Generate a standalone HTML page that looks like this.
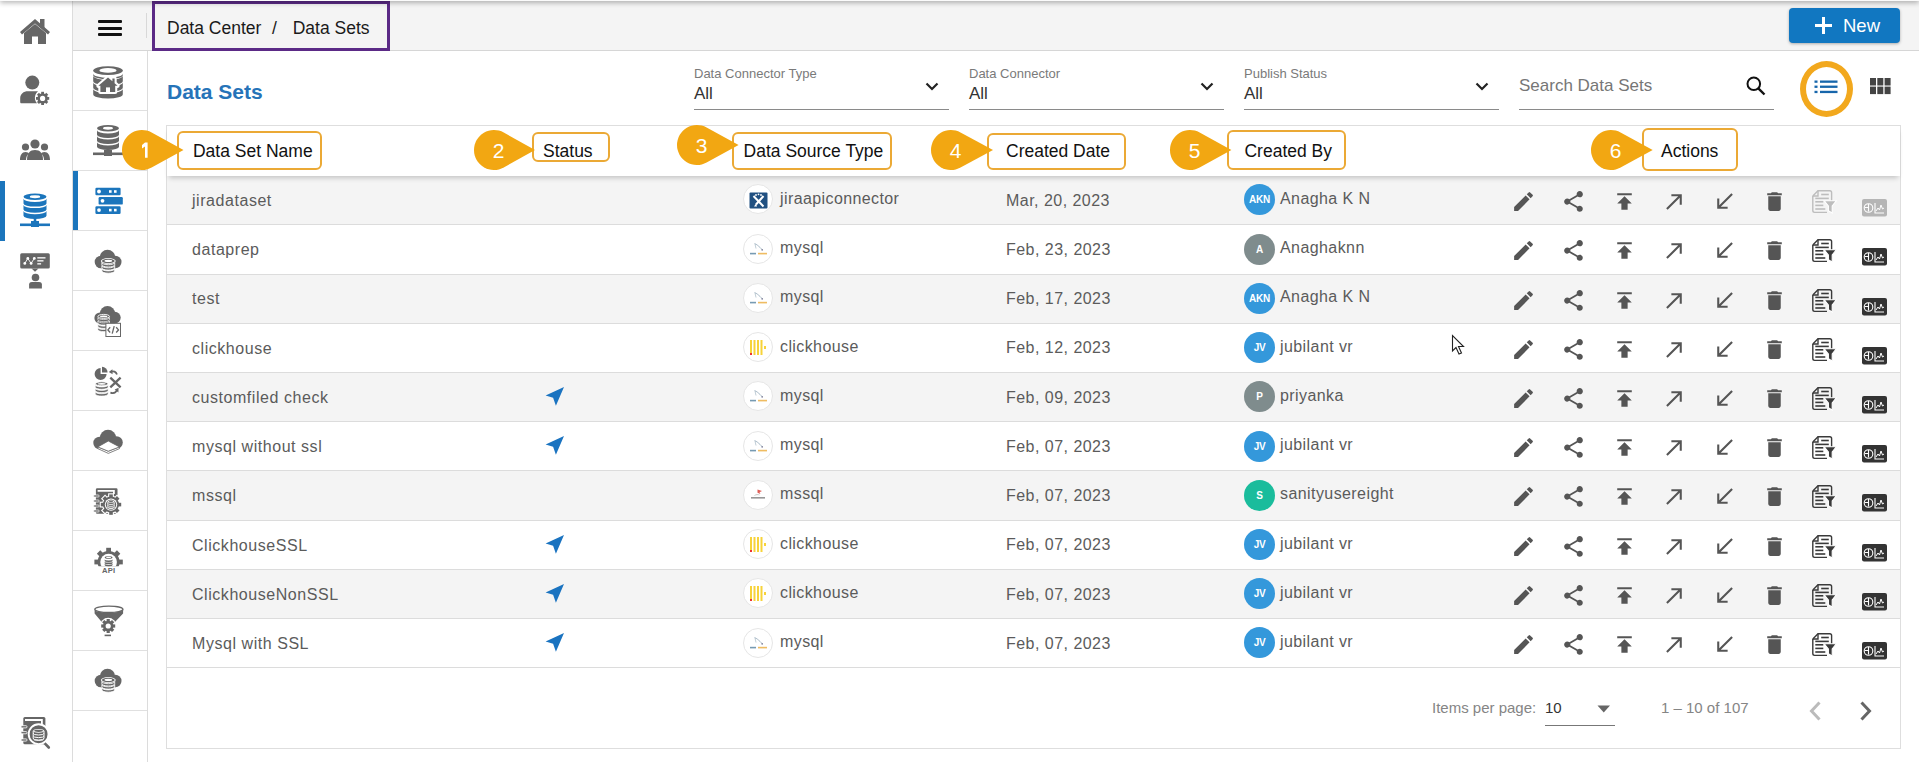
<!DOCTYPE html>
<html><head><meta charset="utf-8">
<style>
*{box-sizing:border-box;margin:0;padding:0}
html,body{width:1919px;height:762px;overflow:hidden;background:#fff;font-family:"Liberation Sans",sans-serif;position:relative}
.abs{position:absolute}
.ic{position:absolute;overflow:visible}
#topshadow{position:absolute;left:0;top:-9px;width:1919px;height:10px;background:#fbfbfb;box-shadow:0 2px 5px rgba(0,0,0,.28);z-index:50}
#sb1{left:0;top:0;width:73px;height:762px;background:#fff;border-right:1px solid #dcdcdc}
#topbar{left:73px;top:0;width:1846px;height:51px;background:#f4f4f4;border-bottom:1px solid #d6d6d6}
#sb2{left:73px;top:51px;width:75px;height:711px;background:#fff;border-right:1px solid #dcdcdc}
#crumb{left:152px;top:1px;width:238px;height:50px;border:3px solid #5b2a86;font-size:18px;color:#222;line-height:47px;padding-left:11px;white-space:pre;z-index:5}
#newbtn{left:1789px;top:8px;width:111px;height:35px;background:#1177c1;border-radius:4px;color:#fff;font-size:18.5px;line-height:35px;box-shadow:0 1px 3px rgba(0,0,0,.3)}
#title{left:167px;top:80px;font-size:21px;font-weight:bold;color:#2673b8}
.flt{position:absolute;top:62px;width:255px;height:48px;border-bottom:1px solid #8a8a8a}
.flt .lb{position:absolute;left:0;top:3.5px;font-size:13px;color:#7a7a7a;white-space:nowrap}
.flt .vl{position:absolute;left:0;top:22px;font-size:17px;color:#333;white-space:nowrap}
.flt svg{position:absolute;right:10px;top:19.5px}
#card{left:166px;top:125px;width:1735px;height:624px;border:1px solid #dedede;background:#fff}
#thead{left:167px;top:126px;width:1733px;height:50px;background:#fff;box-shadow:0 4px 5px -2px rgba(0,0,0,.2);z-index:3}
.hbox{position:absolute;border:2px solid #eba935;border-radius:6px;background:#fff;font-size:17.5px;color:#111;white-space:nowrap;z-index:10}
.row{left:167px;width:1733px;height:49.23px;border-bottom:1px solid #dcdcdc;font-size:16px;color:#5b5b5b;letter-spacing:0.3px}
.row .t{position:absolute;white-space:nowrap}
.av{position:absolute;width:31px;height:31px;border-radius:50%;color:#fff;font-size:10px;font-weight:bold;text-align:center;line-height:31px;letter-spacing:-0.3px}
.srcic{position:absolute;width:30px;height:30px;border-radius:50%;background:#fff;border:1px solid #e6e6e6}

</style></head><body>
<div id="topshadow"></div>
<div id="sb1" class="abs"></div>
<div id="topbar" class="abs"></div>
<div id="sb2" class="abs"></div>
<svg class="ic" style="left:19px;top:17px;" width="32" height="28" viewBox="0 0 32 28"><g fill="#666"><path d="M1 15 L16 2 L31 15 L29 17.5 L16 6.5 L3 17.5 Z"/><rect x="21" y="2" width="4.5" height="9"/><path d="M5 16 L16 7 L27 16 V27 H19 V19.5 H13 V27 H5 Z"/></g></svg><svg class="ic" style="left:19px;top:75px;" width="31" height="30" viewBox="0 0 31 30"><g fill="#666"><circle cx="13.3" cy="7.6" r="7"/><path d="M1.2 27 V23.5 C1.2 19 4.5 16.3 9 16.3 H19 C16.5 18.5 15.5 21.5 16 24.5 C16.3 26 17 27.3 18 28.3 H2.5 C1.7 28.3 1.2 27.8 1.2 27Z"/></g><g transform="translate(23.6,23.4)"><circle r="3.9" fill="none" stroke="#666" stroke-width="2.6"/><rect x="-1.4" y="-6.6" width="2.8" height="2.8" fill="#666" transform="rotate(0)"/><rect x="-1.4" y="-6.6" width="2.8" height="2.8" fill="#666" transform="rotate(45)"/><rect x="-1.4" y="-6.6" width="2.8" height="2.8" fill="#666" transform="rotate(90)"/><rect x="-1.4" y="-6.6" width="2.8" height="2.8" fill="#666" transform="rotate(135)"/><rect x="-1.4" y="-6.6" width="2.8" height="2.8" fill="#666" transform="rotate(180)"/><rect x="-1.4" y="-6.6" width="2.8" height="2.8" fill="#666" transform="rotate(225)"/><rect x="-1.4" y="-6.6" width="2.8" height="2.8" fill="#666" transform="rotate(270)"/><rect x="-1.4" y="-6.6" width="2.8" height="2.8" fill="#666" transform="rotate(315)"/></g></svg><svg class="ic" style="left:19px;top:139px;" width="32" height="23" viewBox="0 0 32 23"><g fill="#666"><circle cx="16" cy="5" r="4.6"/><circle cx="6.5" cy="8" r="3.6"/><circle cx="25.5" cy="8" r="3.6"/><path d="M8 21 C8 14 11 11 16 11 C21 11 24 14 24 21Z"/><path d="M1 21 C1 16 3 13 6.5 13 C8.5 13 9.5 14 10 14.5 C8 16 7 18 7 21Z"/><path d="M31 21 C31 16 29 13 25.5 13 C23.5 13 22.5 14 22 14.5 C24 16 25 18 25 21Z"/></g></svg><svg class="ic" style="left:19px;top:192px;" width="32" height="37" viewBox="0 0 32 37"><g fill="#1b75bc"><ellipse cx="16" cy="4.7" rx="11.5" ry="3.2" fill="#1b75bc"/><ellipse cx="16" cy="4.7" rx="5.175" ry="1.4400000000000002" fill="#fff"/><path d="M4.5 6.7 v4.7 a11.5 3.2 0 0 0 23 0 v-4.7 a11.5 3.2 0 0 1 -23 0Z" fill="#1b75bc"/><path d="M4.5 12.9 v4.7 a11.5 3.2 0 0 0 23 0 v-4.7 a11.5 3.2 0 0 1 -23 0Z" fill="#1b75bc"/><path d="M4.5 19.1 v4.7 a11.5 3.2 0 0 0 23 0 v-4.7 a11.5 3.2 0 0 1 -23 0Z" fill="#1b75bc"/><rect x="1" y="31.5" width="30" height="2.6"/><rect x="14.7" y="25" width="2.6" height="7"/><rect x="12" y="29" width="8" height="6"/></g></svg><svg class="ic" style="left:19px;top:252px;" width="32" height="38" viewBox="0 0 32 38"><g fill="#666"><rect x="1.2" y="1.2" width="29.6" height="15.4" rx="1.5"/><path d="M12.5 16.5 L16 19.8 L19.5 16.5Z"/><circle cx="16.5" cy="25.5" r="3.8"/><path d="M10.1 36.6 V32.5 C10.1 30.8 11.3 30 13 30 H20 C21.7 30 22.9 30.8 22.9 32.5 V36.6Z"/></g><g fill="none" stroke="#fff" stroke-width="0.9"><path d="M5.8 11.4 L8.8 6.4 L12.1 11.4 L15.3 6.4"/></g><g fill="#fff"><circle cx="5.8" cy="11.4" r="1.4"/><circle cx="8.8" cy="6.4" r="1.4"/><circle cx="12.1" cy="11.4" r="1.4"/><circle cx="15.3" cy="6.4" r="1.4"/><rect x="18.3" y="5.2" width="8.2" height="1.3"/><rect x="18.3" y="8.2" width="6.2" height="1.3"/><rect x="18.3" y="11.2" width="3.8" height="1.3"/></g></svg><svg class="ic" style="left:20px;top:716px;" width="32" height="34" viewBox="0 0 32 34"><rect x="3.3" y="1.1" width="22.1" height="27.2" rx="1.5" fill="#666"/><path d="M5 2.9 H22.8 V8 H21 V4.9 H5Z" fill="#fff"/><rect x="1" y="9.7" width="6" height="2.2" rx="1" fill="#666" stroke="#fff" stroke-width="0.8"/><rect x="1" y="15.6" width="6" height="2.2" rx="1" fill="#666" stroke="#fff" stroke-width="0.8"/><rect x="1" y="22.9" width="6" height="2.2" rx="1" fill="#666" stroke="#fff" stroke-width="0.8"/><path d="M24.3 26.8 L28.8 31.5" stroke="#666" stroke-width="2.6" stroke-linecap="round"/><circle cx="18.6" cy="18.2" r="9.9" fill="#666" stroke="#fff" stroke-width="1.9"/><ellipse cx="18.6" cy="14.8" rx="5.4" ry="1.9" fill="#fff"/><ellipse cx="18.6" cy="14.8" rx="4.4" ry="1.1" fill="#666"/><path d="M13.2 17.2 a5.4 1.8 0 0 0 10.8 0" fill="none" stroke="#fff" stroke-width="1"/><path d="M13.2 19.8 a5.4 1.8 0 0 0 10.8 0" fill="none" stroke="#fff" stroke-width="1"/><path d="M13.2 22.4 a5.4 1.8 0 0 0 10.8 0" fill="none" stroke="#fff" stroke-width="1"/><path d="M13.2 14.8 V22.5 a5.4 1.8 0 0 0 10.8 0 V14.8" fill="none" stroke="#fff" stroke-width="1"/></svg><div class="abs" style="left:0;top:181px;width:5px;height:60px;background:#1b75bc"></div><div class="abs" style="left:73px;top:110px;width:74px;height:1px;background:#e0e0e0"></div><div class="abs" style="left:73px;top:170px;width:74px;height:1px;background:#e0e0e0"></div><div class="abs" style="left:73px;top:230px;width:74px;height:1px;background:#e0e0e0"></div><div class="abs" style="left:73px;top:290px;width:74px;height:1px;background:#e0e0e0"></div><div class="abs" style="left:73px;top:350px;width:74px;height:1px;background:#e0e0e0"></div><div class="abs" style="left:73px;top:410px;width:74px;height:1px;background:#e0e0e0"></div><div class="abs" style="left:73px;top:470px;width:74px;height:1px;background:#e0e0e0"></div><div class="abs" style="left:73px;top:530px;width:74px;height:1px;background:#e0e0e0"></div><div class="abs" style="left:73px;top:590px;width:74px;height:1px;background:#e0e0e0"></div><div class="abs" style="left:73px;top:650px;width:74px;height:1px;background:#e0e0e0"></div><div class="abs" style="left:73px;top:710px;width:74px;height:1px;background:#e0e0e0"></div><div class="abs" style="left:73px;top:171px;width:5px;height:59px;background:#1b75bc"></div><svg class="ic" style="left:92px;top:65px;" width="32" height="33" viewBox="0 0 32 33"><ellipse cx="16" cy="5.6" rx="14.8" ry="4.4" fill="#666"/><ellipse cx="16" cy="5.4" rx="8.6" ry="2.3" fill="#fff"/><path d="M1.2 10.6 v5.4 a14.8 4.4 0 0 0 29.6 0 v-5.4 a14.8 4.4 0 0 1 -29.6 0Z" fill="#666"/><path d="M1.2 17.2 v5.4 a14.8 4.4 0 0 0 29.6 0 v-5.4 a14.8 4.4 0 0 1 -29.6 0Z" fill="#666"/><path d="M1.2 23.8 v5.4 a14.8 4.4 0 0 0 29.6 0 v-5.4 a14.8 4.4 0 0 1 -29.6 0Z" fill="#666"/><path d="M1.2 8.5 v1.5 a14.8 4.4 0 0 0 29.6 0 v-1.5 a14.8 4.4 0 0 1 -29.6 0Z" fill="#666"/><path d="M16 12.6 L6.4 20.8 H8.4 V27 H23.2 V20.8 H25.6 L22.6 18.2 V13.6 H20.4 V16.3Z" fill="#fff" stroke="#fff" stroke-width="4.2" stroke-linejoin="round"/><path d="M16 12.6 L6.4 20.8 H8.4 V27 H23.2 V20.8 H25.6 L22.6 18.2 V13.6 H20.4 V16.3Z" fill="#666"/><rect x="14" y="22.4" width="4" height="4.6" fill="#fff"/></svg><svg class="ic" style="left:92px;top:124px;" width="32" height="34" viewBox="0 0 32 34"><ellipse cx="16" cy="4.2" rx="11.0" ry="3.2" fill="#666"/><ellipse cx="16" cy="4.2" rx="4.95" ry="1.4400000000000002" fill="#fff"/><path d="M5.0 6.2 v4.5 a11.0 3.2 0 0 0 22 0 v-4.5 a11.0 3.2 0 0 1 -22 0Z" fill="#666"/><path d="M5.0 12.2 v4.5 a11.0 3.2 0 0 0 22 0 v-4.5 a11.0 3.2 0 0 1 -22 0Z" fill="#666"/><path d="M5.0 18.2 v4.5 a11.0 3.2 0 0 0 22 0 v-4.5 a11.0 3.2 0 0 1 -22 0Z" fill="#666"/><g fill="#666"><rect x="1" y="28.5" width="30" height="2.6"/><rect x="14.7" y="23" width="2.6" height="6"/><rect x="12" y="26" width="8" height="6"/></g></svg><svg class="ic" style="left:94px;top:187px;" width="30" height="28" viewBox="0 0 30 28"><g fill="#1b75bc"><rect x="1.4" y="0.7" width="25.2" height="7.6" rx="1.2"/><rect x="4.6" y="10" width="24.2" height="7.6" rx="1.2"/><rect x="1.4" y="19.3" width="25.2" height="7.6" rx="1.2"/></g><g fill="#fff"><circle cx="5" cy="4.5" r="1.9"/><rect x="15" y="3.2" width="2.6" height="2.6"/><rect x="20" y="3.2" width="2.6" height="2.6"/><circle cx="8.5" cy="13.8" r="1.9"/><circle cx="5" cy="23.1" r="1.9"/><rect x="15" y="21.8" width="2.6" height="2.6"/><rect x="20" y="21.8" width="2.6" height="2.6"/></g></svg><svg class="ic" style="left:93px;top:249px;" width="30" height="25" viewBox="0 0 30 25"><g fill="#666"><circle cx="8" cy="13" r="6.3"/><circle cx="14.5" cy="8.5" r="7.7"/><circle cx="22.3" cy="13" r="6.2"/><rect x="8" y="12" width="14.3" height="7.3"/></g><ellipse cx="15.3" cy="12" rx="7.4" ry="3" fill="#fff"/><ellipse cx="15.3" cy="12" rx="6.4" ry="2.2" fill="#666"/><ellipse cx="15.3" cy="11.9" rx="3.8" ry="1.1" fill="#fff"/><path d="M8.9 13.6 v2.3 a6.4 2.1 0 0 0 12.8 0 v-2.3 a6.4 2.1 0 0 1 -12.8 0Z" fill="#666" stroke="#fff" stroke-width="0.9"/><path d="M8.9 16.7 v2.3 a6.4 2.1 0 0 0 12.8 0 v-2.3 a6.4 2.1 0 0 1 -12.8 0Z" fill="#666" stroke="#fff" stroke-width="0.9"/><path d="M8.9 19.8 v2.3 a6.4 2.1 0 0 0 12.8 0 v-2.3 a6.4 2.1 0 0 1 -12.8 0Z" fill="#666" stroke="#fff" stroke-width="0.9"/></svg><svg class="ic" style="left:93px;top:305px;" width="30" height="33" viewBox="0 0 30 33"><g fill="#666"><circle cx="7" cy="13" r="5.6"/><circle cx="14.5" cy="8.6" r="7.6"/><circle cx="21.8" cy="12.6" r="5.9"/><rect x="7" y="12" width="15" height="7.6"/></g><ellipse cx="10.7" cy="11.4" rx="5.8" ry="2" fill="#666" stroke="#fff" stroke-width="0.9"/><ellipse cx="10.7" cy="11.4" rx="3.60" ry="0.9" fill="#fff"/><path d="M4.90 12.60 v2.10 a5.8 2 0 0 0 11.6 0 v-2.10 a5.8 2 0 0 1 -11.6 0Z" fill="#666" stroke="#fff" stroke-width="0.65"/><path d="M4.90 15.90 v2.10 a5.8 2 0 0 0 11.6 0 v-2.10 a5.8 2 0 0 1 -11.6 0Z" fill="#666" stroke="#fff" stroke-width="0.65"/><path d="M4.90 19.20 v2.10 a5.8 2 0 0 0 11.6 0 v-2.10 a5.8 2 0 0 1 -11.6 0Z" fill="#666" stroke="#fff" stroke-width="0.65"/><path d="M4.90 22.50 v2.10 a5.8 2 0 0 0 11.6 0 v-2.10 a5.8 2 0 0 1 -11.6 0Z" fill="#666" stroke="#fff" stroke-width="0.65"/><rect x="12.9" y="18.3" width="14.6" height="13.2" fill="#fff" stroke="#666" stroke-width="1"/><path d="M17.2 22.3 L14.9 24.9 L17.2 27.5 M23.2 22.3 L25.5 24.9 L23.2 27.5" fill="none" stroke="#666" stroke-width="1.3"/><path d="M21.2 21.2 L19.2 28.6" stroke="#666" stroke-width="1.3"/></svg><svg class="ic" style="left:94px;top:366px;" width="30" height="30" viewBox="0 0 30 30"><g fill="#666"><path d="M6.6 2.1 A6 6 0 1 0 12.6 8.1 H6.6Z"/><path d="M8 0.8 A5.6 5.6 0 0 1 13.6 6.4 H8Z"/></g><path d="M16.6 5.8 C19.5 4.6 22 5.6 23 8.6" fill="none" stroke="#666" stroke-width="1.7"/><path d="M14.8 5.9 L18.4 3.2 L18.6 8.2Z" fill="#666"/><path d="M16.3 11.6 L26.6 21.4 M26.6 11.6 L16.3 21.4" stroke="#666" stroke-width="2.3"/><path d="M16.4 26.6 C19.5 27.6 22 26.6 23 24" fill="none" stroke="#666" stroke-width="1.7"/><path d="M20.6 23.6 L24.6 21.8 L24.4 26.4Z" fill="#666"/><ellipse cx="7.7" cy="17.8" rx="6.4" ry="2" fill="#666" stroke="#fff" stroke-width="0.9"/><ellipse cx="7.7" cy="17.8" rx="3.97" ry="0.9" fill="#fff"/><path d="M1.30 19.00 v2.20 a6.4 2 0 0 0 12.8 0 v-2.20 a6.4 2 0 0 1 -12.8 0Z" fill="#666" stroke="#fff" stroke-width="0.65"/><path d="M1.30 22.40 v2.20 a6.4 2 0 0 0 12.8 0 v-2.20 a6.4 2 0 0 1 -12.8 0Z" fill="#666" stroke="#fff" stroke-width="0.65"/><path d="M1.30 25.80 v2.20 a6.4 2 0 0 0 12.8 0 v-2.20 a6.4 2 0 0 1 -12.8 0Z" fill="#666" stroke="#fff" stroke-width="0.65"/></svg><svg class="ic" style="left:92px;top:428px;" width="32" height="28" viewBox="0 0 32 28"><g fill="#666"><circle cx="7.5" cy="15" r="6.2"/><circle cx="16" cy="10" r="8.2"/><circle cx="24.5" cy="14.5" r="6.3"/><rect x="7.5" y="13" width="17" height="8.2"/></g><path d="M5.8 18.9 V20.6 L16.3 25.4 L27.5 20.6 V18.9 L16.3 23.2Z" fill="#fff" stroke="#666" stroke-width="0.8" stroke-linejoin="round"/><path d="M16.3 13 L5.8 18.9 L16.3 23.2 L27.5 18.9Z" fill="#fff" stroke="#666" stroke-width="0.8" stroke-linejoin="round"/></svg><svg class="ic" style="left:92px;top:487px;" width="32" height="30" viewBox="0 0 32 30"><rect x="3.9" y="1.2" width="21.6" height="25.6" rx="1.2" fill="#666"/><path d="M5.6 2.9 H22.8 V7 H21 V4.7 H5.6Z" fill="#fff"/><rect x="1.6" y="8" width="5.6" height="2" rx="1" fill="#666" stroke="#fff" stroke-width="0.7"/><rect x="1.6" y="13" width="5.6" height="2" rx="1" fill="#666" stroke="#fff" stroke-width="0.7"/><rect x="1.6" y="18" width="5.6" height="2" rx="1" fill="#666" stroke="#fff" stroke-width="0.7"/><rect x="1.6" y="23" width="5.6" height="2" rx="1" fill="#666" stroke="#fff" stroke-width="0.7"/><g transform="translate(19,17.6)"><g fill="#fff" stroke="#fff" stroke-width="2.2"><circle r="8"/><rect x="-1.8" y="-10.2" width="3.6" height="3.6" transform="rotate(0)"/><rect x="-1.8" y="-10.2" width="3.6" height="3.6" transform="rotate(45)"/><rect x="-1.8" y="-10.2" width="3.6" height="3.6" transform="rotate(90)"/><rect x="-1.8" y="-10.2" width="3.6" height="3.6" transform="rotate(135)"/><rect x="-1.8" y="-10.2" width="3.6" height="3.6" transform="rotate(180)"/><rect x="-1.8" y="-10.2" width="3.6" height="3.6" transform="rotate(225)"/><rect x="-1.8" y="-10.2" width="3.6" height="3.6" transform="rotate(270)"/><rect x="-1.8" y="-10.2" width="3.6" height="3.6" transform="rotate(315)"/></g><g fill="#666"><circle r="8"/><rect x="-1.8" y="-10.2" width="3.6" height="3.6" transform="rotate(0)"/><rect x="-1.8" y="-10.2" width="3.6" height="3.6" transform="rotate(45)"/><rect x="-1.8" y="-10.2" width="3.6" height="3.6" transform="rotate(90)"/><rect x="-1.8" y="-10.2" width="3.6" height="3.6" transform="rotate(135)"/><rect x="-1.8" y="-10.2" width="3.6" height="3.6" transform="rotate(180)"/><rect x="-1.8" y="-10.2" width="3.6" height="3.6" transform="rotate(225)"/><rect x="-1.8" y="-10.2" width="3.6" height="3.6" transform="rotate(270)"/><rect x="-1.8" y="-10.2" width="3.6" height="3.6" transform="rotate(315)"/></g><circle r="6.2" fill="#fff"/><circle r="5.2" fill="#666"/></g><ellipse cx="19" cy="14.6" rx="3.2" ry="1.2" fill="#fff"/><ellipse cx="19" cy="14.6" rx="2.3" ry="0.6" fill="#666"/><path d="M15.8 16.4 a3.2 1.1 0 0 0 6.4 0" fill="none" stroke="#fff" stroke-width="0.8"/><path d="M15.8 18.3 a3.2 1.1 0 0 0 6.4 0" fill="none" stroke="#fff" stroke-width="0.8"/><path d="M15.8 20.2 a3.2 1.1 0 0 0 6.4 0" fill="none" stroke="#fff" stroke-width="0.8"/><path d="M15.8 14.6 V20.3 a3.2 1.1 0 0 0 6.4 0 V14.6" fill="none" stroke="#fff" stroke-width="0.8"/></svg><svg class="ic" style="left:93px;top:545px;" width="32" height="30" viewBox="0 0 32 30"><defs><clipPath id="gclip"><rect x="0" y="0" width="32" height="21.2"/></clipPath></defs><g clip-path="url(#gclip)"><g transform="translate(15.6,17)" fill="#666"><circle r="11"/><rect x="-2.4" y="-14.2" width="4.8" height="4.6" transform="rotate(0)"/><rect x="-2.4" y="-14.2" width="4.8" height="4.6" transform="rotate(45)"/><rect x="-2.4" y="-14.2" width="4.8" height="4.6" transform="rotate(90)"/><rect x="-2.4" y="-14.2" width="4.8" height="4.6" transform="rotate(135)"/><rect x="-2.4" y="-14.2" width="4.8" height="4.6" transform="rotate(180)"/><rect x="-2.4" y="-14.2" width="4.8" height="4.6" transform="rotate(225)"/><rect x="-2.4" y="-14.2" width="4.8" height="4.6" transform="rotate(270)"/><rect x="-2.4" y="-14.2" width="4.8" height="4.6" transform="rotate(315)"/></g><circle cx="15.6" cy="17" r="8.3" fill="#fff"/></g><ellipse cx="15.6" cy="12.6" rx="3.9" ry="1.4" fill="#666"/><ellipse cx="15.6" cy="12.5" rx="2.6" ry="0.7" fill="#fff"/><path d="M11.7 14.2 v1.5 a3.9 1.2 0 0 0 7.8 0 v-1.5 a3.9 1.2 0 0 1 -7.8 0Z" fill="#666"/><path d="M11.7 16.4 v1.5 a3.9 1.2 0 0 0 7.8 0 v-1.5 a3.9 1.2 0 0 1 -7.8 0Z" fill="#666"/><path d="M11.7 18.6 v1.5 a3.9 1.2 0 0 0 7.8 0 v-1.5 a3.9 1.2 0 0 1 -7.8 0Z" fill="#666"/><text x="15.6" y="27.6" font-size="7.6" font-family="Liberation Sans" font-weight="bold" text-anchor="middle" fill="#666" style="letter-spacing:0.2px">API</text></svg><svg class="ic" style="left:94px;top:604px;" width="30" height="34" viewBox="0 0 30 34"><path d="M0.6 5.4 V9.5 L7.5 17.8 H21.2 L29.1 9.5 V5.4 A14.25 3.4 0 0 1 0.6 5.4Z" fill="#666"/><ellipse cx="14.85" cy="5.3" rx="14.1" ry="3.2" fill="#fff" stroke="#666" stroke-width="1.3"/><circle cx="14.2" cy="22" r="8.2" fill="#fff"/><g transform="translate(14.2,22)" fill="#666"><circle r="5.2"/><rect x="-1.6" y="-7" width="3.2" height="3" transform="rotate(0)"/><rect x="-1.6" y="-7" width="3.2" height="3" transform="rotate(45)"/><rect x="-1.6" y="-7" width="3.2" height="3" transform="rotate(90)"/><rect x="-1.6" y="-7" width="3.2" height="3" transform="rotate(135)"/><rect x="-1.6" y="-7" width="3.2" height="3" transform="rotate(180)"/><rect x="-1.6" y="-7" width="3.2" height="3" transform="rotate(225)"/><rect x="-1.6" y="-7" width="3.2" height="3" transform="rotate(270)"/><rect x="-1.6" y="-7" width="3.2" height="3" transform="rotate(315)"/><circle r="2.6" fill="#fff"/></g><rect x="10.6" y="30.6" width="6.4" height="1.6" fill="#666"/></svg><svg class="ic" style="left:93px;top:668px;" width="30" height="25" viewBox="0 0 30 25"><g fill="#666"><circle cx="8" cy="13" r="6.3"/><circle cx="14.5" cy="8.5" r="7.7"/><circle cx="22.3" cy="13" r="6.2"/><rect x="8" y="12" width="14.3" height="7.3"/></g><ellipse cx="15.3" cy="12" rx="7.4" ry="3" fill="#fff"/><ellipse cx="15.3" cy="12" rx="6.4" ry="2.2" fill="#666"/><ellipse cx="15.3" cy="11.9" rx="3.8" ry="1.1" fill="#fff"/><path d="M8.9 13.6 v2.3 a6.4 2.1 0 0 0 12.8 0 v-2.3 a6.4 2.1 0 0 1 -12.8 0Z" fill="#666" stroke="#fff" stroke-width="0.9"/><path d="M8.9 16.7 v2.3 a6.4 2.1 0 0 0 12.8 0 v-2.3 a6.4 2.1 0 0 1 -12.8 0Z" fill="#666" stroke="#fff" stroke-width="0.9"/><path d="M8.9 19.8 v2.3 a6.4 2.1 0 0 0 12.8 0 v-2.3 a6.4 2.1 0 0 1 -12.8 0Z" fill="#666" stroke="#fff" stroke-width="0.9"/></svg><div class="abs" style="left:98px;top:20px;width:24px;height:3px;background:#111;border-radius:1px"></div><div class="abs" style="left:98px;top:26.5px;width:24px;height:3px;background:#111;border-radius:1px"></div><div class="abs" style="left:98px;top:33px;width:24px;height:3px;background:#111;border-radius:1px"></div><div class="abs" style="left:146px;top:13px;width:1px;height:25px;background:#d8d8d8"></div><div id="crumb" class="abs"></div><div class="abs" style="left:167px;top:17.8px;font-size:17.5px;color:#1a1a1a;z-index:6">Data Center</div><div class="abs" style="left:272px;top:17.8px;font-size:17.5px;color:#1a1a1a;z-index:6">/</div><div class="abs" style="left:292.7px;top:17.8px;font-size:17.5px;color:#1a1a1a;z-index:6">Data Sets</div><div id="newbtn" class="abs"><svg class="ic" style="left:26px;top:9px" width="17" height="17"><rect x="7" y="0" width="3" height="17" fill="#fff"/><rect x="0" y="7" width="17" height="3" fill="#fff"/></svg><span style="position:absolute;left:54px;top:0">New</span></div><div id="title" class="abs">Data Sets</div><div class="flt" style="left:694px"><div class="lb">Data Connector Type</div><div class="vl">All</div><svg width="14" height="9" viewBox="0 0 14 9"><path d="M1.5 1.5 L7 7 L12.5 1.5" fill="none" stroke="#222" stroke-width="2.2"/></svg></div><div class="flt" style="left:969px"><div class="lb">Data Connector</div><div class="vl">All</div><svg width="14" height="9" viewBox="0 0 14 9"><path d="M1.5 1.5 L7 7 L12.5 1.5" fill="none" stroke="#222" stroke-width="2.2"/></svg></div><div class="flt" style="left:1244px"><div class="lb">Publish Status</div><div class="vl">All</div><svg width="14" height="9" viewBox="0 0 14 9"><path d="M1.5 1.5 L7 7 L12.5 1.5" fill="none" stroke="#222" stroke-width="2.2"/></svg></div><div class="flt" style="left:1519px"><div class="vl" style="top:14px;color:#767676">Search Data Sets</div><svg style="right:8px;top:14px" width="20" height="20" viewBox="0 0 20 20"><circle cx="7.8" cy="7.8" r="6.3" fill="none" stroke="#111" stroke-width="2"/><path d="M12.3 12.3 L18.5 18.5" stroke="#111" stroke-width="2.4"/></svg></div><div class="abs" style="left:1800px;top:61px;width:53px;height:56px;border:6px solid #f2a81d;border-radius:50%"></div><svg class="ic" style="left:1814px;top:80px;filter:none" width="24" height="14" viewBox="0 0 24 14"><g fill="#1766ab"><rect x="0.5" y="0.5" width="3" height="2.3"/><rect x="0.5" y="5.6" width="3" height="2.3"/><rect x="0.5" y="10.8" width="3" height="2.3"/><rect x="6" y="0.5" width="17.5" height="2.3"/><rect x="6" y="5.6" width="17.5" height="2.3"/><rect x="6" y="10.8" width="17.5" height="2.3"/></g></svg><svg class="ic" style="left:1869px;top:77px;" width="23" height="18" viewBox="0 0 23 18"><g fill="#444"><rect x="1.0" y="1.0" width="6" height="7.5"/><rect x="8.3" y="1.0" width="6" height="7.5"/><rect x="15.6" y="1.0" width="6" height="7.5"/><rect x="1.0" y="9.6" width="6" height="7.5"/><rect x="8.3" y="9.6" width="6" height="7.5"/><rect x="15.6" y="9.6" width="6" height="7.5"/></g></svg><div id="card" class="abs"></div><div id="thead" class="abs"></div><div class="row abs" style="top:176.10px;background:#f4f4f4"><div class="t" style="left:25px;top:15.8px;letter-spacing:0.55px">jiradataset</div><div class="srcic" style="left:576px;top:8.4px"><svg width="29" height="29" viewBox="0 0 29 29" style="position:absolute;left:0;top:0"><rect x="5.5" y="7.5" width="18" height="16" rx="1" fill="#205081"/><path d="M9.5 11 L19.5 21.5 M19.5 11 L12 19.5" stroke="#fff" stroke-width="2"/><circle cx="12" cy="10" r="0.9" fill="#fff"/><circle cx="14.5" cy="9.3" r="0.9" fill="#fff"/><circle cx="17" cy="10" r="0.9" fill="#fff"/><path d="M10 21.5 L12 18.5 L13 21.5Z" fill="#fff"/></svg></div><div class="t" style="left:613px;top:13.8px;letter-spacing:0.4px">jiraapiconnector</div><div class="t" style="left:839px;top:15.6px;letter-spacing:0.47px">Mar, 20, 2023</div><div class="av" style="left:1077px;top:8.3px;background:#3498db">AKN</div><div class="t" style="left:1113px;top:13.8px;letter-spacing:0.42px">Anagha K N</div><svg class="ic" style="left:1344px;top:13px" width="25" height="25" viewBox="0 0 24 24"><path d="M3 17.25V21h3.75L17.81 9.94l-3.75-3.75L3 17.25zM20.71 7.04a1 1 0 000-1.41l-2.34-2.34a1 1 0 00-1.41 0l-1.83 1.83 3.75 3.75 1.83-1.83z" fill="#555"/></svg><svg class="ic" style="left:1394px;top:13px" width="25" height="25" viewBox="0 0 24 24"><path d="M18 16.08c-.76 0-1.44.3-1.96.77L8.91 12.7c.05-.23.09-.46.09-.7s-.04-.47-.09-.7l7.05-4.11c.54.5 1.25.81 2.04.81 1.66 0 3-1.34 3-3s-1.34-3-3-3-3 1.34-3 3c0 .24.04.47.09.7L8.04 9.81C7.5 9.31 6.79 9 6 9c-1.66 0-3 1.34-3 3s1.34 3 3 3c.79 0 1.5-.31 2.04-.81l7.12 4.16c-.05.21-.08.43-.08.65 0 1.61 1.31 2.92 2.92 2.92 1.61 0 2.92-1.31 2.92-2.92s-1.31-2.92-2.92-2.92z" fill="#555"/></svg><svg class="ic" style="left:1445px;top:13px" width="25" height="25" viewBox="0 0 24 24"><path d="M5 4v2h14V4H5zm0 10h4v6h6v-6h4l-7-7-7 7z" fill="#555"/></svg><svg class="ic" style="left:1495px;top:13px" width="25" height="25" viewBox="0 0 24 24"><path d="M9 5v2h6.59L4 18.59 5.41 20 17 8.41V15h2V5z" fill="#555"/></svg><svg class="ic" style="left:1545px;top:13px" width="25" height="25" viewBox="0 0 24 24"><path d="M20 5.41L18.59 4 7 15.59V9H5v10h10v-2H8.41z" fill="#555"/></svg><svg class="ic" style="left:1595px;top:13px" width="25" height="25" viewBox="0 0 24 24"><path d="M6 19c0 1.1.9 2 2 2h8c1.1 0 2-.9 2-2V7H6v12zM19 4h-3.5l-1-1h-5l-1 1H5v2h14V4z" fill="#555"/></svg><svg class="ic" style="left:1645px;top:14px" width="25" height="24" viewBox="0 0 25 24"><g fill="none" stroke="#bdbdbd" stroke-width="1.4"><path d="M0.8 6 L6 0.8 H17.8 Q19.6 0.8 19.6 2.6 V11.5"/><path d="M0.8 6 V20.6 Q0.8 22.4 2.6 22.4 H15"/><path d="M0.8 6 H6 V0.8"/></g><g fill="#bdbdbd"><rect x="9.2" y="3.7" width="7.6" height="1.6"/><rect x="3.3" y="7.6" width="13.5" height="1.6"/><rect x="3.3" y="11" width="8" height="1.6"/><rect x="3.3" y="14.6" width="8" height="1.6"/><rect x="3.3" y="18.2" width="10" height="1.6"/><path d="M12.2 10.8 H24.3 L20.2 16 V23 L16.4 20.8 V16Z" stroke="#fff" stroke-width="1.1"/></g></svg><svg class="ic" style="left:1695px;top:23px" width="25" height="18" viewBox="0 0 25 18"><rect x="0" y="0" width="25" height="17.6" rx="2" fill="#b5b5b5"/><circle cx="6.5" cy="9" r="4.3" fill="none" stroke="#fff" stroke-width="1.1"/><path d="M3 8.5 H6.5 V12.5 M6.5 5 V8" stroke="#fff" stroke-width="1.1" fill="none"/><path d="M13 4 V14 H22" fill="none" stroke="#fff" stroke-width="1.1"/><path d="M14 12 L16 9 L17.5 11 L19 6 L20.5 10 L22 9" fill="none" stroke="#fff" stroke-width="1"/></svg></div><div class="row abs" style="top:225.33px;background:#fff"><div class="t" style="left:25px;top:15.8px;letter-spacing:0.55px">dataprep</div><div class="srcic" style="left:576px;top:8.4px"><svg width="29" height="29" viewBox="0 0 29 29" style="position:absolute;left:-1px;top:-1px"><path d="M11.5 9.5 C13 10 16 12 19.5 16" fill="none" stroke="#6d8ba0" stroke-width="0.7" opacity="0.8"/><path d="M12 10 L13 14.5" stroke="#6d8ba0" stroke-width="0.6" opacity="0.7"/><rect x="18.5" y="15" width="1.4" height="1.8" fill="#557" opacity="0.6"/><rect x="7" y="18.8" width="6" height="1.6" fill="#4a7a99" opacity="0.75"/><rect x="15" y="18.8" width="9" height="1.6" fill="#e8a020" opacity="0.7"/></svg></div><div class="t" style="left:613px;top:13.8px;letter-spacing:0.4px">mysql</div><div class="t" style="left:839px;top:15.6px;letter-spacing:0.47px">Feb, 23, 2023</div><div class="av" style="left:1077px;top:8.3px;background:#7f8c8d">A</div><div class="t" style="left:1113px;top:13.8px;letter-spacing:0.42px">Anaghaknn</div><svg class="ic" style="left:1344px;top:13px" width="25" height="25" viewBox="0 0 24 24"><path d="M3 17.25V21h3.75L17.81 9.94l-3.75-3.75L3 17.25zM20.71 7.04a1 1 0 000-1.41l-2.34-2.34a1 1 0 00-1.41 0l-1.83 1.83 3.75 3.75 1.83-1.83z" fill="#555"/></svg><svg class="ic" style="left:1394px;top:13px" width="25" height="25" viewBox="0 0 24 24"><path d="M18 16.08c-.76 0-1.44.3-1.96.77L8.91 12.7c.05-.23.09-.46.09-.7s-.04-.47-.09-.7l7.05-4.11c.54.5 1.25.81 2.04.81 1.66 0 3-1.34 3-3s-1.34-3-3-3-3 1.34-3 3c0 .24.04.47.09.7L8.04 9.81C7.5 9.31 6.79 9 6 9c-1.66 0-3 1.34-3 3s1.34 3 3 3c.79 0 1.5-.31 2.04-.81l7.12 4.16c-.05.21-.08.43-.08.65 0 1.61 1.31 2.92 2.92 2.92 1.61 0 2.92-1.31 2.92-2.92s-1.31-2.92-2.92-2.92z" fill="#555"/></svg><svg class="ic" style="left:1445px;top:13px" width="25" height="25" viewBox="0 0 24 24"><path d="M5 4v2h14V4H5zm0 10h4v6h6v-6h4l-7-7-7 7z" fill="#555"/></svg><svg class="ic" style="left:1495px;top:13px" width="25" height="25" viewBox="0 0 24 24"><path d="M9 5v2h6.59L4 18.59 5.41 20 17 8.41V15h2V5z" fill="#555"/></svg><svg class="ic" style="left:1545px;top:13px" width="25" height="25" viewBox="0 0 24 24"><path d="M20 5.41L18.59 4 7 15.59V9H5v10h10v-2H8.41z" fill="#555"/></svg><svg class="ic" style="left:1595px;top:13px" width="25" height="25" viewBox="0 0 24 24"><path d="M6 19c0 1.1.9 2 2 2h8c1.1 0 2-.9 2-2V7H6v12zM19 4h-3.5l-1-1h-5l-1 1H5v2h14V4z" fill="#555"/></svg><svg class="ic" style="left:1645px;top:14px" width="25" height="24" viewBox="0 0 25 24"><g fill="none" stroke="#3a3a3a" stroke-width="1.4"><path d="M0.8 6 L6 0.8 H17.8 Q19.6 0.8 19.6 2.6 V11.5"/><path d="M0.8 6 V20.6 Q0.8 22.4 2.6 22.4 H15"/><path d="M0.8 6 H6 V0.8"/></g><g fill="#3a3a3a"><rect x="9.2" y="3.7" width="7.6" height="1.6"/><rect x="3.3" y="7.6" width="13.5" height="1.6"/><rect x="3.3" y="11" width="8" height="1.6"/><rect x="3.3" y="14.6" width="8" height="1.6"/><rect x="3.3" y="18.2" width="10" height="1.6"/><path d="M12.2 10.8 H24.3 L20.2 16 V23 L16.4 20.8 V16Z" stroke="#fff" stroke-width="1.1"/></g></svg><svg class="ic" style="left:1695px;top:23px" width="25" height="18" viewBox="0 0 25 18"><rect x="0" y="0" width="25" height="17.6" rx="2" fill="#333"/><circle cx="6.5" cy="9" r="4.3" fill="none" stroke="#fff" stroke-width="1.1"/><path d="M3 8.5 H6.5 V12.5 M6.5 5 V8" stroke="#fff" stroke-width="1.1" fill="none"/><path d="M13 4 V14 H22" fill="none" stroke="#fff" stroke-width="1.1"/><path d="M14 12 L16 9 L17.5 11 L19 6 L20.5 10 L22 9" fill="none" stroke="#fff" stroke-width="1"/></svg></div><div class="row abs" style="top:274.56px;background:#f4f4f4"><div class="t" style="left:25px;top:15.8px;letter-spacing:0.55px">test</div><div class="srcic" style="left:576px;top:8.4px"><svg width="29" height="29" viewBox="0 0 29 29" style="position:absolute;left:-1px;top:-1px"><path d="M11.5 9.5 C13 10 16 12 19.5 16" fill="none" stroke="#6d8ba0" stroke-width="0.7" opacity="0.8"/><path d="M12 10 L13 14.5" stroke="#6d8ba0" stroke-width="0.6" opacity="0.7"/><rect x="18.5" y="15" width="1.4" height="1.8" fill="#557" opacity="0.6"/><rect x="7" y="18.8" width="6" height="1.6" fill="#4a7a99" opacity="0.75"/><rect x="15" y="18.8" width="9" height="1.6" fill="#e8a020" opacity="0.7"/></svg></div><div class="t" style="left:613px;top:13.8px;letter-spacing:0.4px">mysql</div><div class="t" style="left:839px;top:15.6px;letter-spacing:0.47px">Feb, 17, 2023</div><div class="av" style="left:1077px;top:8.3px;background:#3498db">AKN</div><div class="t" style="left:1113px;top:13.8px;letter-spacing:0.42px">Anagha K N</div><svg class="ic" style="left:1344px;top:13px" width="25" height="25" viewBox="0 0 24 24"><path d="M3 17.25V21h3.75L17.81 9.94l-3.75-3.75L3 17.25zM20.71 7.04a1 1 0 000-1.41l-2.34-2.34a1 1 0 00-1.41 0l-1.83 1.83 3.75 3.75 1.83-1.83z" fill="#555"/></svg><svg class="ic" style="left:1394px;top:13px" width="25" height="25" viewBox="0 0 24 24"><path d="M18 16.08c-.76 0-1.44.3-1.96.77L8.91 12.7c.05-.23.09-.46.09-.7s-.04-.47-.09-.7l7.05-4.11c.54.5 1.25.81 2.04.81 1.66 0 3-1.34 3-3s-1.34-3-3-3-3 1.34-3 3c0 .24.04.47.09.7L8.04 9.81C7.5 9.31 6.79 9 6 9c-1.66 0-3 1.34-3 3s1.34 3 3 3c.79 0 1.5-.31 2.04-.81l7.12 4.16c-.05.21-.08.43-.08.65 0 1.61 1.31 2.92 2.92 2.92 1.61 0 2.92-1.31 2.92-2.92s-1.31-2.92-2.92-2.92z" fill="#555"/></svg><svg class="ic" style="left:1445px;top:13px" width="25" height="25" viewBox="0 0 24 24"><path d="M5 4v2h14V4H5zm0 10h4v6h6v-6h4l-7-7-7 7z" fill="#555"/></svg><svg class="ic" style="left:1495px;top:13px" width="25" height="25" viewBox="0 0 24 24"><path d="M9 5v2h6.59L4 18.59 5.41 20 17 8.41V15h2V5z" fill="#555"/></svg><svg class="ic" style="left:1545px;top:13px" width="25" height="25" viewBox="0 0 24 24"><path d="M20 5.41L18.59 4 7 15.59V9H5v10h10v-2H8.41z" fill="#555"/></svg><svg class="ic" style="left:1595px;top:13px" width="25" height="25" viewBox="0 0 24 24"><path d="M6 19c0 1.1.9 2 2 2h8c1.1 0 2-.9 2-2V7H6v12zM19 4h-3.5l-1-1h-5l-1 1H5v2h14V4z" fill="#555"/></svg><svg class="ic" style="left:1645px;top:14px" width="25" height="24" viewBox="0 0 25 24"><g fill="none" stroke="#3a3a3a" stroke-width="1.4"><path d="M0.8 6 L6 0.8 H17.8 Q19.6 0.8 19.6 2.6 V11.5"/><path d="M0.8 6 V20.6 Q0.8 22.4 2.6 22.4 H15"/><path d="M0.8 6 H6 V0.8"/></g><g fill="#3a3a3a"><rect x="9.2" y="3.7" width="7.6" height="1.6"/><rect x="3.3" y="7.6" width="13.5" height="1.6"/><rect x="3.3" y="11" width="8" height="1.6"/><rect x="3.3" y="14.6" width="8" height="1.6"/><rect x="3.3" y="18.2" width="10" height="1.6"/><path d="M12.2 10.8 H24.3 L20.2 16 V23 L16.4 20.8 V16Z" stroke="#fff" stroke-width="1.1"/></g></svg><svg class="ic" style="left:1695px;top:23px" width="25" height="18" viewBox="0 0 25 18"><rect x="0" y="0" width="25" height="17.6" rx="2" fill="#333"/><circle cx="6.5" cy="9" r="4.3" fill="none" stroke="#fff" stroke-width="1.1"/><path d="M3 8.5 H6.5 V12.5 M6.5 5 V8" stroke="#fff" stroke-width="1.1" fill="none"/><path d="M13 4 V14 H22" fill="none" stroke="#fff" stroke-width="1.1"/><path d="M14 12 L16 9 L17.5 11 L19 6 L20.5 10 L22 9" fill="none" stroke="#fff" stroke-width="1"/></svg></div><div class="row abs" style="top:323.79px;background:#fff"><div class="t" style="left:25px;top:15.8px;letter-spacing:0.55px">clickhouse</div><div class="srcic" style="left:576px;top:8.4px"><svg width="29" height="29" viewBox="0 0 29 29" style="position:absolute;left:0;top:0"><g fill="#f7d33a"><rect x="6" y="7" width="2" height="15"/><rect x="9.5" y="7" width="2" height="15"/><rect x="13" y="7" width="2" height="15"/><rect x="16.5" y="7" width="2" height="15"/><rect x="20" y="13" width="2" height="3"/></g><rect x="6" y="20" width="2" height="2" fill="#e33"/></svg></div><div class="t" style="left:613px;top:13.8px;letter-spacing:0.4px">clickhouse</div><div class="t" style="left:839px;top:15.6px;letter-spacing:0.47px">Feb, 12, 2023</div><div class="av" style="left:1077px;top:8.3px;background:#3498db">JV</div><div class="t" style="left:1113px;top:13.8px;letter-spacing:0.42px">jubilant vr</div><svg class="ic" style="left:1344px;top:13px" width="25" height="25" viewBox="0 0 24 24"><path d="M3 17.25V21h3.75L17.81 9.94l-3.75-3.75L3 17.25zM20.71 7.04a1 1 0 000-1.41l-2.34-2.34a1 1 0 00-1.41 0l-1.83 1.83 3.75 3.75 1.83-1.83z" fill="#555"/></svg><svg class="ic" style="left:1394px;top:13px" width="25" height="25" viewBox="0 0 24 24"><path d="M18 16.08c-.76 0-1.44.3-1.96.77L8.91 12.7c.05-.23.09-.46.09-.7s-.04-.47-.09-.7l7.05-4.11c.54.5 1.25.81 2.04.81 1.66 0 3-1.34 3-3s-1.34-3-3-3-3 1.34-3 3c0 .24.04.47.09.7L8.04 9.81C7.5 9.31 6.79 9 6 9c-1.66 0-3 1.34-3 3s1.34 3 3 3c.79 0 1.5-.31 2.04-.81l7.12 4.16c-.05.21-.08.43-.08.65 0 1.61 1.31 2.92 2.92 2.92 1.61 0 2.92-1.31 2.92-2.92s-1.31-2.92-2.92-2.92z" fill="#555"/></svg><svg class="ic" style="left:1445px;top:13px" width="25" height="25" viewBox="0 0 24 24"><path d="M5 4v2h14V4H5zm0 10h4v6h6v-6h4l-7-7-7 7z" fill="#555"/></svg><svg class="ic" style="left:1495px;top:13px" width="25" height="25" viewBox="0 0 24 24"><path d="M9 5v2h6.59L4 18.59 5.41 20 17 8.41V15h2V5z" fill="#555"/></svg><svg class="ic" style="left:1545px;top:13px" width="25" height="25" viewBox="0 0 24 24"><path d="M20 5.41L18.59 4 7 15.59V9H5v10h10v-2H8.41z" fill="#555"/></svg><svg class="ic" style="left:1595px;top:13px" width="25" height="25" viewBox="0 0 24 24"><path d="M6 19c0 1.1.9 2 2 2h8c1.1 0 2-.9 2-2V7H6v12zM19 4h-3.5l-1-1h-5l-1 1H5v2h14V4z" fill="#555"/></svg><svg class="ic" style="left:1645px;top:14px" width="25" height="24" viewBox="0 0 25 24"><g fill="none" stroke="#3a3a3a" stroke-width="1.4"><path d="M0.8 6 L6 0.8 H17.8 Q19.6 0.8 19.6 2.6 V11.5"/><path d="M0.8 6 V20.6 Q0.8 22.4 2.6 22.4 H15"/><path d="M0.8 6 H6 V0.8"/></g><g fill="#3a3a3a"><rect x="9.2" y="3.7" width="7.6" height="1.6"/><rect x="3.3" y="7.6" width="13.5" height="1.6"/><rect x="3.3" y="11" width="8" height="1.6"/><rect x="3.3" y="14.6" width="8" height="1.6"/><rect x="3.3" y="18.2" width="10" height="1.6"/><path d="M12.2 10.8 H24.3 L20.2 16 V23 L16.4 20.8 V16Z" stroke="#fff" stroke-width="1.1"/></g></svg><svg class="ic" style="left:1695px;top:23px" width="25" height="18" viewBox="0 0 25 18"><rect x="0" y="0" width="25" height="17.6" rx="2" fill="#333"/><circle cx="6.5" cy="9" r="4.3" fill="none" stroke="#fff" stroke-width="1.1"/><path d="M3 8.5 H6.5 V12.5 M6.5 5 V8" stroke="#fff" stroke-width="1.1" fill="none"/><path d="M13 4 V14 H22" fill="none" stroke="#fff" stroke-width="1.1"/><path d="M14 12 L16 9 L17.5 11 L19 6 L20.5 10 L22 9" fill="none" stroke="#fff" stroke-width="1"/></svg></div><div class="row abs" style="top:373.02px;background:#f4f4f4"><div class="t" style="left:25px;top:15.8px;letter-spacing:0.55px">customfiled check</div><svg class="ic" style="left:377px;top:11px" width="22" height="22" viewBox="0 0 22 22"><path d="M20 3 L1.6 11.4 L9.1 13.8 L11.9 21.7Z" fill="#1a73c0"/></svg><div class="srcic" style="left:576px;top:8.4px"><svg width="29" height="29" viewBox="0 0 29 29" style="position:absolute;left:-1px;top:-1px"><path d="M11.5 9.5 C13 10 16 12 19.5 16" fill="none" stroke="#6d8ba0" stroke-width="0.7" opacity="0.8"/><path d="M12 10 L13 14.5" stroke="#6d8ba0" stroke-width="0.6" opacity="0.7"/><rect x="18.5" y="15" width="1.4" height="1.8" fill="#557" opacity="0.6"/><rect x="7" y="18.8" width="6" height="1.6" fill="#4a7a99" opacity="0.75"/><rect x="15" y="18.8" width="9" height="1.6" fill="#e8a020" opacity="0.7"/></svg></div><div class="t" style="left:613px;top:13.8px;letter-spacing:0.4px">mysql</div><div class="t" style="left:839px;top:15.6px;letter-spacing:0.47px">Feb, 09, 2023</div><div class="av" style="left:1077px;top:8.3px;background:#7f8c8d">P</div><div class="t" style="left:1113px;top:13.8px;letter-spacing:0.42px">priyanka</div><svg class="ic" style="left:1344px;top:13px" width="25" height="25" viewBox="0 0 24 24"><path d="M3 17.25V21h3.75L17.81 9.94l-3.75-3.75L3 17.25zM20.71 7.04a1 1 0 000-1.41l-2.34-2.34a1 1 0 00-1.41 0l-1.83 1.83 3.75 3.75 1.83-1.83z" fill="#555"/></svg><svg class="ic" style="left:1394px;top:13px" width="25" height="25" viewBox="0 0 24 24"><path d="M18 16.08c-.76 0-1.44.3-1.96.77L8.91 12.7c.05-.23.09-.46.09-.7s-.04-.47-.09-.7l7.05-4.11c.54.5 1.25.81 2.04.81 1.66 0 3-1.34 3-3s-1.34-3-3-3-3 1.34-3 3c0 .24.04.47.09.7L8.04 9.81C7.5 9.31 6.79 9 6 9c-1.66 0-3 1.34-3 3s1.34 3 3 3c.79 0 1.5-.31 2.04-.81l7.12 4.16c-.05.21-.08.43-.08.65 0 1.61 1.31 2.92 2.92 2.92 1.61 0 2.92-1.31 2.92-2.92s-1.31-2.92-2.92-2.92z" fill="#555"/></svg><svg class="ic" style="left:1445px;top:13px" width="25" height="25" viewBox="0 0 24 24"><path d="M5 4v2h14V4H5zm0 10h4v6h6v-6h4l-7-7-7 7z" fill="#555"/></svg><svg class="ic" style="left:1495px;top:13px" width="25" height="25" viewBox="0 0 24 24"><path d="M9 5v2h6.59L4 18.59 5.41 20 17 8.41V15h2V5z" fill="#555"/></svg><svg class="ic" style="left:1545px;top:13px" width="25" height="25" viewBox="0 0 24 24"><path d="M20 5.41L18.59 4 7 15.59V9H5v10h10v-2H8.41z" fill="#555"/></svg><svg class="ic" style="left:1595px;top:13px" width="25" height="25" viewBox="0 0 24 24"><path d="M6 19c0 1.1.9 2 2 2h8c1.1 0 2-.9 2-2V7H6v12zM19 4h-3.5l-1-1h-5l-1 1H5v2h14V4z" fill="#555"/></svg><svg class="ic" style="left:1645px;top:14px" width="25" height="24" viewBox="0 0 25 24"><g fill="none" stroke="#3a3a3a" stroke-width="1.4"><path d="M0.8 6 L6 0.8 H17.8 Q19.6 0.8 19.6 2.6 V11.5"/><path d="M0.8 6 V20.6 Q0.8 22.4 2.6 22.4 H15"/><path d="M0.8 6 H6 V0.8"/></g><g fill="#3a3a3a"><rect x="9.2" y="3.7" width="7.6" height="1.6"/><rect x="3.3" y="7.6" width="13.5" height="1.6"/><rect x="3.3" y="11" width="8" height="1.6"/><rect x="3.3" y="14.6" width="8" height="1.6"/><rect x="3.3" y="18.2" width="10" height="1.6"/><path d="M12.2 10.8 H24.3 L20.2 16 V23 L16.4 20.8 V16Z" stroke="#fff" stroke-width="1.1"/></g></svg><svg class="ic" style="left:1695px;top:23px" width="25" height="18" viewBox="0 0 25 18"><rect x="0" y="0" width="25" height="17.6" rx="2" fill="#333"/><circle cx="6.5" cy="9" r="4.3" fill="none" stroke="#fff" stroke-width="1.1"/><path d="M3 8.5 H6.5 V12.5 M6.5 5 V8" stroke="#fff" stroke-width="1.1" fill="none"/><path d="M13 4 V14 H22" fill="none" stroke="#fff" stroke-width="1.1"/><path d="M14 12 L16 9 L17.5 11 L19 6 L20.5 10 L22 9" fill="none" stroke="#fff" stroke-width="1"/></svg></div><div class="row abs" style="top:422.25px;background:#fff"><div class="t" style="left:25px;top:15.8px;letter-spacing:0.55px">mysql without ssl</div><svg class="ic" style="left:377px;top:11px" width="22" height="22" viewBox="0 0 22 22"><path d="M20 3 L1.6 11.4 L9.1 13.8 L11.9 21.7Z" fill="#1a73c0"/></svg><div class="srcic" style="left:576px;top:8.4px"><svg width="29" height="29" viewBox="0 0 29 29" style="position:absolute;left:-1px;top:-1px"><path d="M11.5 9.5 C13 10 16 12 19.5 16" fill="none" stroke="#6d8ba0" stroke-width="0.7" opacity="0.8"/><path d="M12 10 L13 14.5" stroke="#6d8ba0" stroke-width="0.6" opacity="0.7"/><rect x="18.5" y="15" width="1.4" height="1.8" fill="#557" opacity="0.6"/><rect x="7" y="18.8" width="6" height="1.6" fill="#4a7a99" opacity="0.75"/><rect x="15" y="18.8" width="9" height="1.6" fill="#e8a020" opacity="0.7"/></svg></div><div class="t" style="left:613px;top:13.8px;letter-spacing:0.4px">mysql</div><div class="t" style="left:839px;top:15.6px;letter-spacing:0.47px">Feb, 07, 2023</div><div class="av" style="left:1077px;top:8.3px;background:#3498db">JV</div><div class="t" style="left:1113px;top:13.8px;letter-spacing:0.42px">jubilant vr</div><svg class="ic" style="left:1344px;top:13px" width="25" height="25" viewBox="0 0 24 24"><path d="M3 17.25V21h3.75L17.81 9.94l-3.75-3.75L3 17.25zM20.71 7.04a1 1 0 000-1.41l-2.34-2.34a1 1 0 00-1.41 0l-1.83 1.83 3.75 3.75 1.83-1.83z" fill="#555"/></svg><svg class="ic" style="left:1394px;top:13px" width="25" height="25" viewBox="0 0 24 24"><path d="M18 16.08c-.76 0-1.44.3-1.96.77L8.91 12.7c.05-.23.09-.46.09-.7s-.04-.47-.09-.7l7.05-4.11c.54.5 1.25.81 2.04.81 1.66 0 3-1.34 3-3s-1.34-3-3-3-3 1.34-3 3c0 .24.04.47.09.7L8.04 9.81C7.5 9.31 6.79 9 6 9c-1.66 0-3 1.34-3 3s1.34 3 3 3c.79 0 1.5-.31 2.04-.81l7.12 4.16c-.05.21-.08.43-.08.65 0 1.61 1.31 2.92 2.92 2.92 1.61 0 2.92-1.31 2.92-2.92s-1.31-2.92-2.92-2.92z" fill="#555"/></svg><svg class="ic" style="left:1445px;top:13px" width="25" height="25" viewBox="0 0 24 24"><path d="M5 4v2h14V4H5zm0 10h4v6h6v-6h4l-7-7-7 7z" fill="#555"/></svg><svg class="ic" style="left:1495px;top:13px" width="25" height="25" viewBox="0 0 24 24"><path d="M9 5v2h6.59L4 18.59 5.41 20 17 8.41V15h2V5z" fill="#555"/></svg><svg class="ic" style="left:1545px;top:13px" width="25" height="25" viewBox="0 0 24 24"><path d="M20 5.41L18.59 4 7 15.59V9H5v10h10v-2H8.41z" fill="#555"/></svg><svg class="ic" style="left:1595px;top:13px" width="25" height="25" viewBox="0 0 24 24"><path d="M6 19c0 1.1.9 2 2 2h8c1.1 0 2-.9 2-2V7H6v12zM19 4h-3.5l-1-1h-5l-1 1H5v2h14V4z" fill="#555"/></svg><svg class="ic" style="left:1645px;top:14px" width="25" height="24" viewBox="0 0 25 24"><g fill="none" stroke="#3a3a3a" stroke-width="1.4"><path d="M0.8 6 L6 0.8 H17.8 Q19.6 0.8 19.6 2.6 V11.5"/><path d="M0.8 6 V20.6 Q0.8 22.4 2.6 22.4 H15"/><path d="M0.8 6 H6 V0.8"/></g><g fill="#3a3a3a"><rect x="9.2" y="3.7" width="7.6" height="1.6"/><rect x="3.3" y="7.6" width="13.5" height="1.6"/><rect x="3.3" y="11" width="8" height="1.6"/><rect x="3.3" y="14.6" width="8" height="1.6"/><rect x="3.3" y="18.2" width="10" height="1.6"/><path d="M12.2 10.8 H24.3 L20.2 16 V23 L16.4 20.8 V16Z" stroke="#fff" stroke-width="1.1"/></g></svg><svg class="ic" style="left:1695px;top:23px" width="25" height="18" viewBox="0 0 25 18"><rect x="0" y="0" width="25" height="17.6" rx="2" fill="#333"/><circle cx="6.5" cy="9" r="4.3" fill="none" stroke="#fff" stroke-width="1.1"/><path d="M3 8.5 H6.5 V12.5 M6.5 5 V8" stroke="#fff" stroke-width="1.1" fill="none"/><path d="M13 4 V14 H22" fill="none" stroke="#fff" stroke-width="1.1"/><path d="M14 12 L16 9 L17.5 11 L19 6 L20.5 10 L22 9" fill="none" stroke="#fff" stroke-width="1"/></svg></div><div class="row abs" style="top:471.48px;background:#f4f4f4"><div class="t" style="left:25px;top:15.8px;letter-spacing:0.55px">mssql</div><div class="srcic" style="left:576px;top:8.4px"><svg width="30" height="30" viewBox="0 0 30 30" style="position:absolute;left:-1px;top:-1px"><path d="M14.5 9.5 C16 10 17.5 10.5 19 11 L16.5 12.2 L17.5 14 L14.5 12.8Z" fill="#d9423a" opacity="0.85"/><path d="M11.5 15.5 C13 14.5 15 14.3 16.5 15" fill="none" stroke="#bbb" stroke-width="0.8"/><rect x="8" y="17" width="14" height="1.6" fill="#444" opacity="0.55"/></svg></div><div class="t" style="left:613px;top:13.8px;letter-spacing:0.4px">mssql</div><div class="t" style="left:839px;top:15.6px;letter-spacing:0.47px">Feb, 07, 2023</div><div class="av" style="left:1077px;top:8.3px;background:#1abc9c">S</div><div class="t" style="left:1113px;top:13.8px;letter-spacing:0.42px">sanityusereight</div><svg class="ic" style="left:1344px;top:13px" width="25" height="25" viewBox="0 0 24 24"><path d="M3 17.25V21h3.75L17.81 9.94l-3.75-3.75L3 17.25zM20.71 7.04a1 1 0 000-1.41l-2.34-2.34a1 1 0 00-1.41 0l-1.83 1.83 3.75 3.75 1.83-1.83z" fill="#555"/></svg><svg class="ic" style="left:1394px;top:13px" width="25" height="25" viewBox="0 0 24 24"><path d="M18 16.08c-.76 0-1.44.3-1.96.77L8.91 12.7c.05-.23.09-.46.09-.7s-.04-.47-.09-.7l7.05-4.11c.54.5 1.25.81 2.04.81 1.66 0 3-1.34 3-3s-1.34-3-3-3-3 1.34-3 3c0 .24.04.47.09.7L8.04 9.81C7.5 9.31 6.79 9 6 9c-1.66 0-3 1.34-3 3s1.34 3 3 3c.79 0 1.5-.31 2.04-.81l7.12 4.16c-.05.21-.08.43-.08.65 0 1.61 1.31 2.92 2.92 2.92 1.61 0 2.92-1.31 2.92-2.92s-1.31-2.92-2.92-2.92z" fill="#555"/></svg><svg class="ic" style="left:1445px;top:13px" width="25" height="25" viewBox="0 0 24 24"><path d="M5 4v2h14V4H5zm0 10h4v6h6v-6h4l-7-7-7 7z" fill="#555"/></svg><svg class="ic" style="left:1495px;top:13px" width="25" height="25" viewBox="0 0 24 24"><path d="M9 5v2h6.59L4 18.59 5.41 20 17 8.41V15h2V5z" fill="#555"/></svg><svg class="ic" style="left:1545px;top:13px" width="25" height="25" viewBox="0 0 24 24"><path d="M20 5.41L18.59 4 7 15.59V9H5v10h10v-2H8.41z" fill="#555"/></svg><svg class="ic" style="left:1595px;top:13px" width="25" height="25" viewBox="0 0 24 24"><path d="M6 19c0 1.1.9 2 2 2h8c1.1 0 2-.9 2-2V7H6v12zM19 4h-3.5l-1-1h-5l-1 1H5v2h14V4z" fill="#555"/></svg><svg class="ic" style="left:1645px;top:14px" width="25" height="24" viewBox="0 0 25 24"><g fill="none" stroke="#3a3a3a" stroke-width="1.4"><path d="M0.8 6 L6 0.8 H17.8 Q19.6 0.8 19.6 2.6 V11.5"/><path d="M0.8 6 V20.6 Q0.8 22.4 2.6 22.4 H15"/><path d="M0.8 6 H6 V0.8"/></g><g fill="#3a3a3a"><rect x="9.2" y="3.7" width="7.6" height="1.6"/><rect x="3.3" y="7.6" width="13.5" height="1.6"/><rect x="3.3" y="11" width="8" height="1.6"/><rect x="3.3" y="14.6" width="8" height="1.6"/><rect x="3.3" y="18.2" width="10" height="1.6"/><path d="M12.2 10.8 H24.3 L20.2 16 V23 L16.4 20.8 V16Z" stroke="#fff" stroke-width="1.1"/></g></svg><svg class="ic" style="left:1695px;top:23px" width="25" height="18" viewBox="0 0 25 18"><rect x="0" y="0" width="25" height="17.6" rx="2" fill="#333"/><circle cx="6.5" cy="9" r="4.3" fill="none" stroke="#fff" stroke-width="1.1"/><path d="M3 8.5 H6.5 V12.5 M6.5 5 V8" stroke="#fff" stroke-width="1.1" fill="none"/><path d="M13 4 V14 H22" fill="none" stroke="#fff" stroke-width="1.1"/><path d="M14 12 L16 9 L17.5 11 L19 6 L20.5 10 L22 9" fill="none" stroke="#fff" stroke-width="1"/></svg></div><div class="row abs" style="top:520.71px;background:#fff"><div class="t" style="left:25px;top:15.8px;letter-spacing:0.55px">ClickhouseSSL</div><svg class="ic" style="left:377px;top:11px" width="22" height="22" viewBox="0 0 22 22"><path d="M20 3 L1.6 11.4 L9.1 13.8 L11.9 21.7Z" fill="#1a73c0"/></svg><div class="srcic" style="left:576px;top:8.4px"><svg width="29" height="29" viewBox="0 0 29 29" style="position:absolute;left:0;top:0"><g fill="#f7d33a"><rect x="6" y="7" width="2" height="15"/><rect x="9.5" y="7" width="2" height="15"/><rect x="13" y="7" width="2" height="15"/><rect x="16.5" y="7" width="2" height="15"/><rect x="20" y="13" width="2" height="3"/></g><rect x="6" y="20" width="2" height="2" fill="#e33"/></svg></div><div class="t" style="left:613px;top:13.8px;letter-spacing:0.4px">clickhouse</div><div class="t" style="left:839px;top:15.6px;letter-spacing:0.47px">Feb, 07, 2023</div><div class="av" style="left:1077px;top:8.3px;background:#3498db">JV</div><div class="t" style="left:1113px;top:13.8px;letter-spacing:0.42px">jubilant vr</div><svg class="ic" style="left:1344px;top:13px" width="25" height="25" viewBox="0 0 24 24"><path d="M3 17.25V21h3.75L17.81 9.94l-3.75-3.75L3 17.25zM20.71 7.04a1 1 0 000-1.41l-2.34-2.34a1 1 0 00-1.41 0l-1.83 1.83 3.75 3.75 1.83-1.83z" fill="#555"/></svg><svg class="ic" style="left:1394px;top:13px" width="25" height="25" viewBox="0 0 24 24"><path d="M18 16.08c-.76 0-1.44.3-1.96.77L8.91 12.7c.05-.23.09-.46.09-.7s-.04-.47-.09-.7l7.05-4.11c.54.5 1.25.81 2.04.81 1.66 0 3-1.34 3-3s-1.34-3-3-3-3 1.34-3 3c0 .24.04.47.09.7L8.04 9.81C7.5 9.31 6.79 9 6 9c-1.66 0-3 1.34-3 3s1.34 3 3 3c.79 0 1.5-.31 2.04-.81l7.12 4.16c-.05.21-.08.43-.08.65 0 1.61 1.31 2.92 2.92 2.92 1.61 0 2.92-1.31 2.92-2.92s-1.31-2.92-2.92-2.92z" fill="#555"/></svg><svg class="ic" style="left:1445px;top:13px" width="25" height="25" viewBox="0 0 24 24"><path d="M5 4v2h14V4H5zm0 10h4v6h6v-6h4l-7-7-7 7z" fill="#555"/></svg><svg class="ic" style="left:1495px;top:13px" width="25" height="25" viewBox="0 0 24 24"><path d="M9 5v2h6.59L4 18.59 5.41 20 17 8.41V15h2V5z" fill="#555"/></svg><svg class="ic" style="left:1545px;top:13px" width="25" height="25" viewBox="0 0 24 24"><path d="M20 5.41L18.59 4 7 15.59V9H5v10h10v-2H8.41z" fill="#555"/></svg><svg class="ic" style="left:1595px;top:13px" width="25" height="25" viewBox="0 0 24 24"><path d="M6 19c0 1.1.9 2 2 2h8c1.1 0 2-.9 2-2V7H6v12zM19 4h-3.5l-1-1h-5l-1 1H5v2h14V4z" fill="#555"/></svg><svg class="ic" style="left:1645px;top:14px" width="25" height="24" viewBox="0 0 25 24"><g fill="none" stroke="#3a3a3a" stroke-width="1.4"><path d="M0.8 6 L6 0.8 H17.8 Q19.6 0.8 19.6 2.6 V11.5"/><path d="M0.8 6 V20.6 Q0.8 22.4 2.6 22.4 H15"/><path d="M0.8 6 H6 V0.8"/></g><g fill="#3a3a3a"><rect x="9.2" y="3.7" width="7.6" height="1.6"/><rect x="3.3" y="7.6" width="13.5" height="1.6"/><rect x="3.3" y="11" width="8" height="1.6"/><rect x="3.3" y="14.6" width="8" height="1.6"/><rect x="3.3" y="18.2" width="10" height="1.6"/><path d="M12.2 10.8 H24.3 L20.2 16 V23 L16.4 20.8 V16Z" stroke="#fff" stroke-width="1.1"/></g></svg><svg class="ic" style="left:1695px;top:23px" width="25" height="18" viewBox="0 0 25 18"><rect x="0" y="0" width="25" height="17.6" rx="2" fill="#333"/><circle cx="6.5" cy="9" r="4.3" fill="none" stroke="#fff" stroke-width="1.1"/><path d="M3 8.5 H6.5 V12.5 M6.5 5 V8" stroke="#fff" stroke-width="1.1" fill="none"/><path d="M13 4 V14 H22" fill="none" stroke="#fff" stroke-width="1.1"/><path d="M14 12 L16 9 L17.5 11 L19 6 L20.5 10 L22 9" fill="none" stroke="#fff" stroke-width="1"/></svg></div><div class="row abs" style="top:569.94px;background:#f4f4f4"><div class="t" style="left:25px;top:15.8px;letter-spacing:0.55px">ClickhouseNonSSL</div><svg class="ic" style="left:377px;top:11px" width="22" height="22" viewBox="0 0 22 22"><path d="M20 3 L1.6 11.4 L9.1 13.8 L11.9 21.7Z" fill="#1a73c0"/></svg><div class="srcic" style="left:576px;top:8.4px"><svg width="29" height="29" viewBox="0 0 29 29" style="position:absolute;left:0;top:0"><g fill="#f7d33a"><rect x="6" y="7" width="2" height="15"/><rect x="9.5" y="7" width="2" height="15"/><rect x="13" y="7" width="2" height="15"/><rect x="16.5" y="7" width="2" height="15"/><rect x="20" y="13" width="2" height="3"/></g><rect x="6" y="20" width="2" height="2" fill="#e33"/></svg></div><div class="t" style="left:613px;top:13.8px;letter-spacing:0.4px">clickhouse</div><div class="t" style="left:839px;top:15.6px;letter-spacing:0.47px">Feb, 07, 2023</div><div class="av" style="left:1077px;top:8.3px;background:#3498db">JV</div><div class="t" style="left:1113px;top:13.8px;letter-spacing:0.42px">jubilant vr</div><svg class="ic" style="left:1344px;top:13px" width="25" height="25" viewBox="0 0 24 24"><path d="M3 17.25V21h3.75L17.81 9.94l-3.75-3.75L3 17.25zM20.71 7.04a1 1 0 000-1.41l-2.34-2.34a1 1 0 00-1.41 0l-1.83 1.83 3.75 3.75 1.83-1.83z" fill="#555"/></svg><svg class="ic" style="left:1394px;top:13px" width="25" height="25" viewBox="0 0 24 24"><path d="M18 16.08c-.76 0-1.44.3-1.96.77L8.91 12.7c.05-.23.09-.46.09-.7s-.04-.47-.09-.7l7.05-4.11c.54.5 1.25.81 2.04.81 1.66 0 3-1.34 3-3s-1.34-3-3-3-3 1.34-3 3c0 .24.04.47.09.7L8.04 9.81C7.5 9.31 6.79 9 6 9c-1.66 0-3 1.34-3 3s1.34 3 3 3c.79 0 1.5-.31 2.04-.81l7.12 4.16c-.05.21-.08.43-.08.65 0 1.61 1.31 2.92 2.92 2.92 1.61 0 2.92-1.31 2.92-2.92s-1.31-2.92-2.92-2.92z" fill="#555"/></svg><svg class="ic" style="left:1445px;top:13px" width="25" height="25" viewBox="0 0 24 24"><path d="M5 4v2h14V4H5zm0 10h4v6h6v-6h4l-7-7-7 7z" fill="#555"/></svg><svg class="ic" style="left:1495px;top:13px" width="25" height="25" viewBox="0 0 24 24"><path d="M9 5v2h6.59L4 18.59 5.41 20 17 8.41V15h2V5z" fill="#555"/></svg><svg class="ic" style="left:1545px;top:13px" width="25" height="25" viewBox="0 0 24 24"><path d="M20 5.41L18.59 4 7 15.59V9H5v10h10v-2H8.41z" fill="#555"/></svg><svg class="ic" style="left:1595px;top:13px" width="25" height="25" viewBox="0 0 24 24"><path d="M6 19c0 1.1.9 2 2 2h8c1.1 0 2-.9 2-2V7H6v12zM19 4h-3.5l-1-1h-5l-1 1H5v2h14V4z" fill="#555"/></svg><svg class="ic" style="left:1645px;top:14px" width="25" height="24" viewBox="0 0 25 24"><g fill="none" stroke="#3a3a3a" stroke-width="1.4"><path d="M0.8 6 L6 0.8 H17.8 Q19.6 0.8 19.6 2.6 V11.5"/><path d="M0.8 6 V20.6 Q0.8 22.4 2.6 22.4 H15"/><path d="M0.8 6 H6 V0.8"/></g><g fill="#3a3a3a"><rect x="9.2" y="3.7" width="7.6" height="1.6"/><rect x="3.3" y="7.6" width="13.5" height="1.6"/><rect x="3.3" y="11" width="8" height="1.6"/><rect x="3.3" y="14.6" width="8" height="1.6"/><rect x="3.3" y="18.2" width="10" height="1.6"/><path d="M12.2 10.8 H24.3 L20.2 16 V23 L16.4 20.8 V16Z" stroke="#fff" stroke-width="1.1"/></g></svg><svg class="ic" style="left:1695px;top:23px" width="25" height="18" viewBox="0 0 25 18"><rect x="0" y="0" width="25" height="17.6" rx="2" fill="#333"/><circle cx="6.5" cy="9" r="4.3" fill="none" stroke="#fff" stroke-width="1.1"/><path d="M3 8.5 H6.5 V12.5 M6.5 5 V8" stroke="#fff" stroke-width="1.1" fill="none"/><path d="M13 4 V14 H22" fill="none" stroke="#fff" stroke-width="1.1"/><path d="M14 12 L16 9 L17.5 11 L19 6 L20.5 10 L22 9" fill="none" stroke="#fff" stroke-width="1"/></svg></div><div class="row abs" style="top:619.17px;background:#fff"><div class="t" style="left:25px;top:15.8px;letter-spacing:0.55px">Mysql with SSL</div><svg class="ic" style="left:377px;top:11px" width="22" height="22" viewBox="0 0 22 22"><path d="M20 3 L1.6 11.4 L9.1 13.8 L11.9 21.7Z" fill="#1a73c0"/></svg><div class="srcic" style="left:576px;top:8.4px"><svg width="29" height="29" viewBox="0 0 29 29" style="position:absolute;left:-1px;top:-1px"><path d="M11.5 9.5 C13 10 16 12 19.5 16" fill="none" stroke="#6d8ba0" stroke-width="0.7" opacity="0.8"/><path d="M12 10 L13 14.5" stroke="#6d8ba0" stroke-width="0.6" opacity="0.7"/><rect x="18.5" y="15" width="1.4" height="1.8" fill="#557" opacity="0.6"/><rect x="7" y="18.8" width="6" height="1.6" fill="#4a7a99" opacity="0.75"/><rect x="15" y="18.8" width="9" height="1.6" fill="#e8a020" opacity="0.7"/></svg></div><div class="t" style="left:613px;top:13.8px;letter-spacing:0.4px">mysql</div><div class="t" style="left:839px;top:15.6px;letter-spacing:0.47px">Feb, 07, 2023</div><div class="av" style="left:1077px;top:8.3px;background:#3498db">JV</div><div class="t" style="left:1113px;top:13.8px;letter-spacing:0.42px">jubilant vr</div><svg class="ic" style="left:1344px;top:13px" width="25" height="25" viewBox="0 0 24 24"><path d="M3 17.25V21h3.75L17.81 9.94l-3.75-3.75L3 17.25zM20.71 7.04a1 1 0 000-1.41l-2.34-2.34a1 1 0 00-1.41 0l-1.83 1.83 3.75 3.75 1.83-1.83z" fill="#555"/></svg><svg class="ic" style="left:1394px;top:13px" width="25" height="25" viewBox="0 0 24 24"><path d="M18 16.08c-.76 0-1.44.3-1.96.77L8.91 12.7c.05-.23.09-.46.09-.7s-.04-.47-.09-.7l7.05-4.11c.54.5 1.25.81 2.04.81 1.66 0 3-1.34 3-3s-1.34-3-3-3-3 1.34-3 3c0 .24.04.47.09.7L8.04 9.81C7.5 9.31 6.79 9 6 9c-1.66 0-3 1.34-3 3s1.34 3 3 3c.79 0 1.5-.31 2.04-.81l7.12 4.16c-.05.21-.08.43-.08.65 0 1.61 1.31 2.92 2.92 2.92 1.61 0 2.92-1.31 2.92-2.92s-1.31-2.92-2.92-2.92z" fill="#555"/></svg><svg class="ic" style="left:1445px;top:13px" width="25" height="25" viewBox="0 0 24 24"><path d="M5 4v2h14V4H5zm0 10h4v6h6v-6h4l-7-7-7 7z" fill="#555"/></svg><svg class="ic" style="left:1495px;top:13px" width="25" height="25" viewBox="0 0 24 24"><path d="M9 5v2h6.59L4 18.59 5.41 20 17 8.41V15h2V5z" fill="#555"/></svg><svg class="ic" style="left:1545px;top:13px" width="25" height="25" viewBox="0 0 24 24"><path d="M20 5.41L18.59 4 7 15.59V9H5v10h10v-2H8.41z" fill="#555"/></svg><svg class="ic" style="left:1595px;top:13px" width="25" height="25" viewBox="0 0 24 24"><path d="M6 19c0 1.1.9 2 2 2h8c1.1 0 2-.9 2-2V7H6v12zM19 4h-3.5l-1-1h-5l-1 1H5v2h14V4z" fill="#555"/></svg><svg class="ic" style="left:1645px;top:14px" width="25" height="24" viewBox="0 0 25 24"><g fill="none" stroke="#3a3a3a" stroke-width="1.4"><path d="M0.8 6 L6 0.8 H17.8 Q19.6 0.8 19.6 2.6 V11.5"/><path d="M0.8 6 V20.6 Q0.8 22.4 2.6 22.4 H15"/><path d="M0.8 6 H6 V0.8"/></g><g fill="#3a3a3a"><rect x="9.2" y="3.7" width="7.6" height="1.6"/><rect x="3.3" y="7.6" width="13.5" height="1.6"/><rect x="3.3" y="11" width="8" height="1.6"/><rect x="3.3" y="14.6" width="8" height="1.6"/><rect x="3.3" y="18.2" width="10" height="1.6"/><path d="M12.2 10.8 H24.3 L20.2 16 V23 L16.4 20.8 V16Z" stroke="#fff" stroke-width="1.1"/></g></svg><svg class="ic" style="left:1695px;top:23px" width="25" height="18" viewBox="0 0 25 18"><rect x="0" y="0" width="25" height="17.6" rx="2" fill="#333"/><circle cx="6.5" cy="9" r="4.3" fill="none" stroke="#fff" stroke-width="1.1"/><path d="M3 8.5 H6.5 V12.5 M6.5 5 V8" stroke="#fff" stroke-width="1.1" fill="none"/><path d="M13 4 V14 H22" fill="none" stroke="#fff" stroke-width="1.1"/><path d="M14 12 L16 9 L17.5 11 L19 6 L20.5 10 L22 9" fill="none" stroke="#fff" stroke-width="1"/></svg></div><div class="hbox" style="left:176.6px;top:130.5px;width:145.7px;height:39.8px"><span style="position:absolute;left:14.4px;top:8.7px">Data Set Name</span></div><div class="hbox" style="left:531.5px;top:131.5px;width:78.0px;height:30.9px"><span style="position:absolute;left:9.5px;top:7.7px">Status</span></div><div class="hbox" style="left:732.4px;top:131.5px;width:159.8px;height:38.5px"><span style="position:absolute;left:9.2px;top:7.7px">Data Source Type</span></div><div class="hbox" style="left:986.5px;top:132.6px;width:139.9px;height:37.4px"><span style="position:absolute;left:17.5px;top:6.6px">Created Date</span></div><div class="hbox" style="left:1227.3px;top:130.3px;width:118.5px;height:39.7px"><span style="position:absolute;left:15.2px;top:8.9px">Created By</span></div><div class="hbox" style="left:1642.4px;top:128.3px;width:95.2px;height:42.4px"><span style="position:absolute;left:16.6px;top:10.9px">Actions</span></div><svg class="ic" style="left:121.0px;top:129.0px;z-index:20" width="63.5" height="42.0" viewBox="0 0 63.5 42.0"><path d="M62.50 21.00 L30.64 3.48 A20 20 0 1 0 30.64 38.52 Z" fill="#f2a712"/><path d="M24.0 13.4 H26.6 V28.8 H24.0 V17.4 L21.0 19.4 V16.0 Z" fill="#fff"/></svg><svg class="ic" style="left:473.0px;top:129.0px;z-index:20" width="63.0" height="42.0" viewBox="0 0 63.0 42.0"><path d="M62.00 21.00 L30.76 3.54 A20 20 0 1 0 30.76 38.46 Z" fill="#f2a712"/><text x="25.5" y="28.6" font-size="21" font-family="Liberation Sans" text-anchor="middle" fill="#fff">2</text></svg><svg class="ic" style="left:676.0px;top:124.0px;z-index:20" width="63.6" height="42.0" viewBox="0 0 63.6 42.0"><path d="M62.60 21.00 L30.62 3.46 A20 20 0 1 0 30.62 38.54 Z" fill="#f2a712"/><text x="25.5" y="28.6" font-size="21" font-family="Liberation Sans" text-anchor="middle" fill="#fff">3</text></svg><svg class="ic" style="left:930.0px;top:129.4px;z-index:20" width="64.0" height="42.0" viewBox="0 0 64.0 42.0"><path d="M63.00 21.00 L30.52 3.41 A20 20 0 1 0 30.52 38.59 Z" fill="#f2a712"/><text x="25.5" y="28.6" font-size="21" font-family="Liberation Sans" text-anchor="middle" fill="#fff">4</text></svg><svg class="ic" style="left:1169.0px;top:128.5px;z-index:20" width="63.4" height="42.0" viewBox="0 0 63.4 42.0"><path d="M62.40 21.00 L30.66 3.49 A20 20 0 1 0 30.66 38.51 Z" fill="#f2a712"/><text x="25.5" y="28.6" font-size="21" font-family="Liberation Sans" text-anchor="middle" fill="#fff">5</text></svg><svg class="ic" style="left:1590.0px;top:128.8px;z-index:20" width="63.7" height="42.0" viewBox="0 0 63.7 42.0"><path d="M62.70 21.00 L30.59 3.45 A20 20 0 1 0 30.59 38.55 Z" fill="#f2a712"/><text x="25.5" y="28.6" font-size="21" font-family="Liberation Sans" text-anchor="middle" fill="#fff">6</text></svg><div class="abs" style="left:1432px;top:698.5px;font-size:15px;color:#858585">Items per page:</div><div class="abs" style="left:1545px;top:698.5px;font-size:15px;color:#333">10</div><svg class="ic" style="left:1597px;top:705px" width="14" height="8"><path d="M0.5 0.5 H13 L6.75 7.5Z" fill="#666"/></svg><div class="abs" style="left:1545px;top:725px;width:70px;height:1px;background:#777"></div><div class="abs" style="left:1661px;top:698.5px;font-size:15px;color:#858585">1 – 10 of 107</div><svg class="ic" style="left:1808px;top:701px" width="14" height="20"><path d="M11.5 1.5 L3.5 10 L11.5 18.5" fill="none" stroke="#bbb" stroke-width="3"/></svg><svg class="ic" style="left:1859px;top:701px" width="14" height="20"><path d="M2.5 1.5 L10.5 10 L2.5 18.5" fill="none" stroke="#666" stroke-width="3"/></svg><svg class="ic" style="left:1451px;top:334px" width="14" height="22"><path d="M1.5 1.5 V17 L5 13.5 L8 20 L10.5 19 L7.5 12.5 H12.5Z" fill="#fff" stroke="#222" stroke-width="1.1"/></svg>
</body></html>
